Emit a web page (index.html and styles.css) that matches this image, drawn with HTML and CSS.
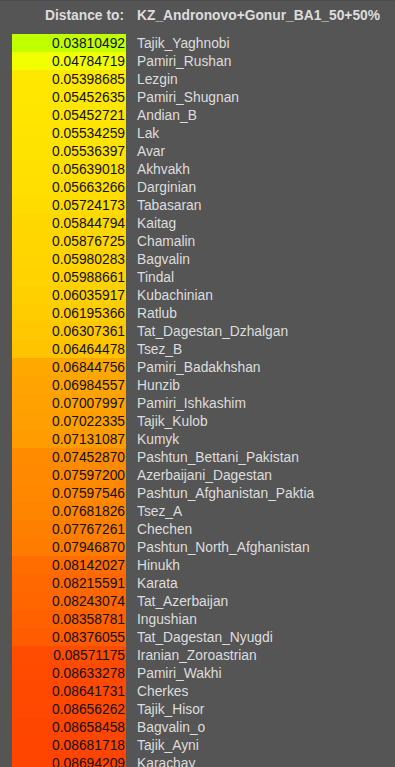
FILE: index.html
```html
<!DOCTYPE html>
<html>
<head>
<meta charset="utf-8">
<link rel="stylesheet" href="styles.css">
</head>
<body>
<div class="panel">
  <div class="head">
    <div class="head-label">Distance to:</div>
    <div class="head-target">KZ_Andronovo+Gonur_BA1_50+50%</div>
  </div>
  <div class="list">
    <div class="val" style="background:#bfff00">0.03810492</div><div class="name">Tajik_Yaghnobi</div>
    <div class="val" style="background:#f2ff00">0.04784719</div><div class="name">Pamiri_Rushan</div>
    <div class="val" style="background:#ffe800">0.05398685</div><div class="name">Lezgin</div>
    <div class="val" style="background:#ffe700">0.05452635</div><div class="name">Pamiri_Shugnan</div>
    <div class="val" style="background:#ffe600">0.05452721</div><div class="name">Andian_B</div>
    <div class="val" style="background:#ffe400">0.05534259</div><div class="name">Lak</div>
    <div class="val" style="background:#ffe300">0.05536397</div><div class="name">Avar</div>
    <div class="val" style="background:#ffe000">0.05639018</div><div class="name">Akhvakh</div>
    <div class="val" style="background:#ffde00">0.05663266</div><div class="name">Darginian</div>
    <div class="val" style="background:#ffdc00">0.05724173</div><div class="name">Tabasaran</div>
    <div class="val" style="background:#ffd800">0.05844794</div><div class="name">Kaitag</div>
    <div class="val" style="background:#ffd600">0.05876725</div><div class="name">Chamalin</div>
    <div class="val" style="background:#ffd400">0.05980283</div><div class="name">Bagvalin</div>
    <div class="val" style="background:#ffd200">0.05988661</div><div class="name">Tindal</div>
    <div class="val" style="background:#ffd000">0.06035917</div><div class="name">Kubachinian</div>
    <div class="val" style="background:#ffcc00">0.06195366</div><div class="name">Ratlub</div>
    <div class="val" style="background:#ffc800">0.06307361</div><div class="name">Tat_Dagestan_Dzhalgan</div>
    <div class="val" style="background:#ffc400">0.06464478</div><div class="name">Tsez_B</div>
    <div class="val" style="background:#ffa800">0.06844756</div><div class="name">Pamiri_Badakhshan</div>
    <div class="val" style="background:#ffa400">0.06984557</div><div class="name">Hunzib</div>
    <div class="val" style="background:#ffa100">0.07007997</div><div class="name">Pamiri_Ishkashim</div>
    <div class="val" style="background:#ffa000">0.07022335</div><div class="name">Tajik_Kulob</div>
    <div class="val" style="background:#ff9c00">0.07131087</div><div class="name">Kumyk</div>
    <div class="val" style="background:#ff8c00">0.07452870</div><div class="name">Pashtun_Bettani_Pakistan</div>
    <div class="val" style="background:#ff8900">0.07597200</div><div class="name">Azerbaijani_Dagestan</div>
    <div class="val" style="background:#ff8800">0.07597546</div><div class="name">Pashtun_Afghanistan_Paktia</div>
    <div class="val" style="background:#ff8400">0.07681826</div><div class="name">Tsez_A</div>
    <div class="val" style="background:#ff8000">0.07767261</div><div class="name">Chechen</div>
    <div class="val" style="background:#ff7c00">0.07946870</div><div class="name">Pashtun_North_Afghanistan</div>
    <div class="val" style="background:#ff6c00">0.08142027</div><div class="name">Hinukh</div>
    <div class="val" style="background:#ff6800">0.08215591</div><div class="name">Karata</div>
    <div class="val" style="background:#ff6600">0.08243074</div><div class="name">Tat_Azerbaijan</div>
    <div class="val" style="background:#ff6000">0.08358781</div><div class="name">Ingushian</div>
    <div class="val" style="background:#ff5c00">0.08376055</div><div class="name">Tat_Dagestan_Nyugdi</div>
    <div class="val" style="background:#ff4c00">0.08571175</div><div class="name">Iranian_Zoroastrian</div>
    <div class="val" style="background:#ff4a00">0.08633278</div><div class="name">Pamiri_Wakhi</div>
    <div class="val" style="background:#ff4900">0.08641731</div><div class="name">Cherkes</div>
    <div class="val" style="background:#ff4800">0.08656262</div><div class="name">Tajik_Hisor</div>
    <div class="val" style="background:#ff4600">0.08658458</div><div class="name">Bagvalin_o</div>
    <div class="val" style="background:#ff4500">0.08681718</div><div class="name">Tajik_Ayni</div>
    <div class="val" style="background:#ff4400">0.08694209</div><div class="name">Karachay</div>
  </div>
</div>
</body>
</html>
```

FILE: styles.css
```css
html, body {
  margin: 0;
  padding: 0;
  background: #555555;
  overflow: hidden;
}
.panel {
  border-top: 1px solid #4b4b4b;
  padding-left: 12px;
  font-family: "Liberation Sans", Arial, sans-serif;
  font-size: 13.8px;
  line-height: 18px;
  color: #dddddd;
}
.head {
  display: grid;
  grid-template-columns: 114px 1fr;
  column-gap: 11px;
  padding-top: 6px;
  padding-bottom: 9px;
  font-weight: bold;
}
.head-label {
  text-align: right;
  padding-right: 2px;
}
.list {
  display: grid;
  grid-template-columns: 114px 1fr;
  column-gap: 11px;
  grid-auto-rows: 18px;
}
.val,
.name {
  padding-top: 1px;
  line-height: 18px;
}
.val {
  color: #111;
  text-align: right;
  padding-right: 1px;
}
.name {
  white-space: nowrap;
}
```
